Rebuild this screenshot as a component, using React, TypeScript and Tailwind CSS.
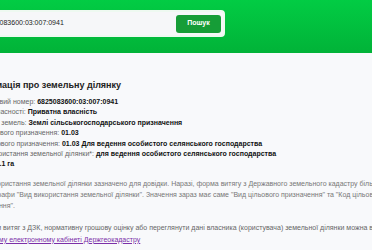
import React from "react";

const rows: { label: string; value: string }[] = [
  { label: "Кадастровий номер: ", value: "6825083600:03:007:0941" },
  { label: "Форма власності: ", value: "Приватна власність" },
  { label: "Категорія земель: ", value: "Землі сільськогосподарського призначення" },
  { label: "Код цільового призначення: ", value: "01.03" },
  { label: "Вид цільового призначення: ", value: "01.03 Для ведення особистого селянського господарства" },
  { label: "Вид використання земельної ділянки*: ", value: "для ведення особистого селянського господарства" },
  { label: "Площа: ", value: "2.1 га" },
];

export default function App() {
  return (
    <div
      className="w-[372px] h-[250px] overflow-hidden bg-[#f8f9fb] relative"
      style={{ fontFamily: '"Liberation Sans", Arial, sans-serif' }}
    >
      <div className="h-[53px] bg-gradient-to-b from-[#02cc44] to-[#01b338] flex items-start">
        <div className="ml-[-60px] mt-[10px] w-[285px] h-[27px] rounded-[4px] bg-[#f6f7f9] border-2 border-[#eef9f1] flex items-center justify-between pr-[2px]">
          <span className="pl-[42px] text-[7px] text-[#222] whitespace-nowrap">6825083600:03:007:0941</span>
          <button className="w-[45px] h-[18px] rounded-[3px] bg-[#169d37] text-white text-[7px] font-bold">
            Пошук
          </button>
        </div>
      </div>
      <div className="ml-[-31px] whitespace-nowrap">
        <div className="pt-[27px] text-[9px] font-bold text-[#222] leading-[10px]">
          Інформація про земельну ділянку
        </div>
        <div className="mt-[7px] text-[7px] leading-[10.4px]">
          {rows.map((r) => (
            <div key={r.label}>
              <span className="text-[#666]">{r.label}</span>
              <span className="font-bold text-[#111]">{r.value}</span>
            </div>
          ))}
        </div>
        <div className="mt-[8px] text-[7px] leading-[11px] text-[#777]">
          <div>*Вид використання земельної ділянки зазначено для довідки. Наразі, форма витягу з Державного земельного кадастру більше не</div>
          <div>містить графи "Вид використання земельної ділянки". Значення зараз має саме "Вид цільового призначення" та "Код цільового</div>
          <div>призначення".</div>
        </div>
        <div className="mt-[11px] text-[7px] leading-[12px] text-[#666]">
          <div>Отримати витяг з ДЗК, нормативну грошову оцінку або переглянути дані власника (користувача) земельної ділянки можна в</div>
          <div>
            <a href="#" className="text-[#7b2fa8] underline">особистому електронному кабінеті Держгеокадастру</a>
          </div>
        </div>
      </div>
    </div>
  );
}
